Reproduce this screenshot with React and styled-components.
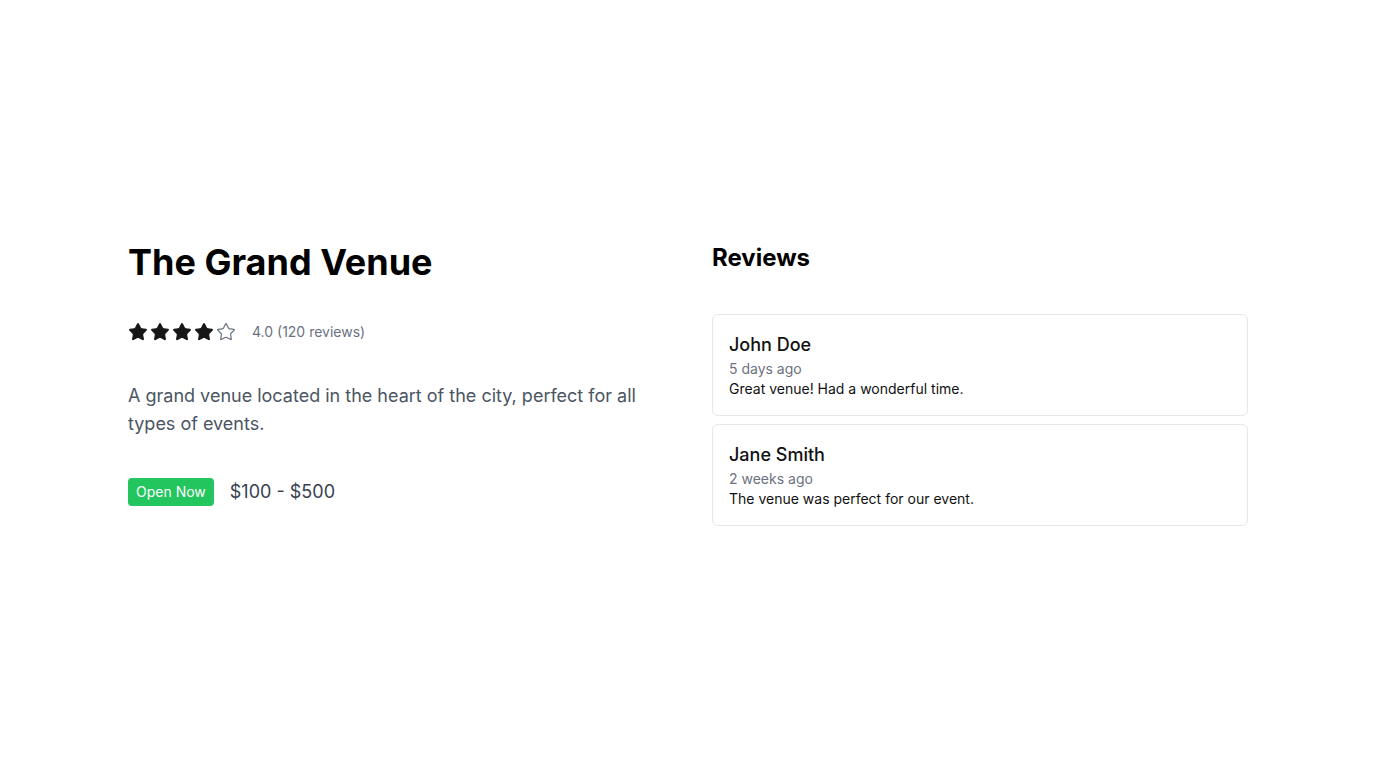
import React from "react";
import styled, { createGlobalStyle } from "styled-components";
import { Star } from "lucide-react";

const GlobalStyle = createGlobalStyle`
  * { box-sizing: border-box; }
  body {
    margin: 0;
    font-family: Inter, "Noto Sans", sans-serif;
    background: #fff;
    color: #111;
  }
`;

const reviews = [
  { name: "John Doe", when: "5 days ago", text: "Great venue! Had a wonderful time." },
  { name: "Jane Smith", when: "2 weeks ago", text: "The venue was perfect for our event." },
];

const App = () => {
  const rating = 4;

  return (
    <>
      <GlobalStyle />
      <Page>
        <Layout>
          <Column>
            <Title>The Grand Venue</Title>
            <RatingRow>
              <Stars>
                {[1, 2, 3, 4, 5].map((n) =>
                  n <= rating ? (
                    <Star key={n} size={20} fill="#171717" color="#171717" strokeWidth={1.5} />
                  ) : (
                    <Star key={n} size={20} color="#6b7280" strokeWidth={1.5} />
                  )
                )}
              </Stars>
              <RatingText>4.0 (120 reviews)</RatingText>
            </RatingRow>
            <Description>
              A grand venue located in the heart of the city, perfect for all types of events.
            </Description>
            <InfoRow>
              <Badge>Open Now</Badge>
              <Price>$100 - $500</Price>
            </InfoRow>
          </Column>
          <Column>
            <SectionTitle>Reviews</SectionTitle>
            <ReviewList>
              {reviews.map((r) => (
                <ReviewCard key={r.name}>
                  <ReviewName>{r.name}</ReviewName>
                  <ReviewDate>{r.when}</ReviewDate>
                  <ReviewText>{r.text}</ReviewText>
                </ReviewCard>
              ))}
            </ReviewList>
          </Column>
        </Layout>
      </Page>
    </>
  );
};

const Page = styled.div`
  min-height: 100vh;
  display: flex;
  align-items: center;
  justify-content: center;
  padding: 0 128px;
`;

const Layout = styled.div`
  width: 100%;
  max-width: 1120px;
  display: grid;
  grid-template-columns: 1fr 1fr;
  column-gap: 48px;
  align-items: start;
`;

const Column = styled.div`
  display: flex;
  flex-direction: column;
  gap: 40px;
`;

const Title = styled.h1`
  margin: 0;
  font-size: 36px;
  line-height: 40px;
  font-weight: 700;
  color: #000;
`;

const RatingRow = styled.div`
  display: flex;
  align-items: center;
  height: 20px;
`;

const Stars = styled.div`
  display: flex;
  gap: 2px;
  margin-right: 16px;

  svg {
    display: block;
  }
`;

const RatingText = styled.span`
  font-size: 14px;
  line-height: 20px;
  color: #6b7280;
`;

const Description = styled.p`
  margin: 0;
  font-size: 18px;
  line-height: 28px;
  color: #4b5563;
`;

const InfoRow = styled.div`
  display: flex;
  align-items: center;
  gap: 16px;
`;

const Badge = styled.span`
  background: #22c55e;
  color: #fff;
  font-size: 14px;
  line-height: 20px;
  padding: 4px 8px;
  border-radius: 4px;
`;

const Price = styled.span`
  font-size: 18px;
  line-height: 28px;
  color: #374151;
`;

const SectionTitle = styled.h2`
  margin: 0;
  font-size: 24px;
  line-height: 32px;
  font-weight: 700;
  color: #000;
`;

const ReviewList = styled.div`
  display: flex;
  flex-direction: column;
  gap: 8px;
`;

const ReviewCard = styled.div`
  border: 1px solid #e5e7eb;
  border-radius: 6px;
  padding: 16px;
  background: #fff;
`;

const ReviewName = styled.div`
  font-size: 18px;
  line-height: 28px;
  font-weight: 500;
  color: #111;
`;

const ReviewDate = styled.div`
  font-size: 14px;
  line-height: 20px;
  color: #6b7280;
`;

const ReviewText = styled.div`
  font-size: 14px;
  line-height: 20px;
  color: #111;
`;

export default App;
